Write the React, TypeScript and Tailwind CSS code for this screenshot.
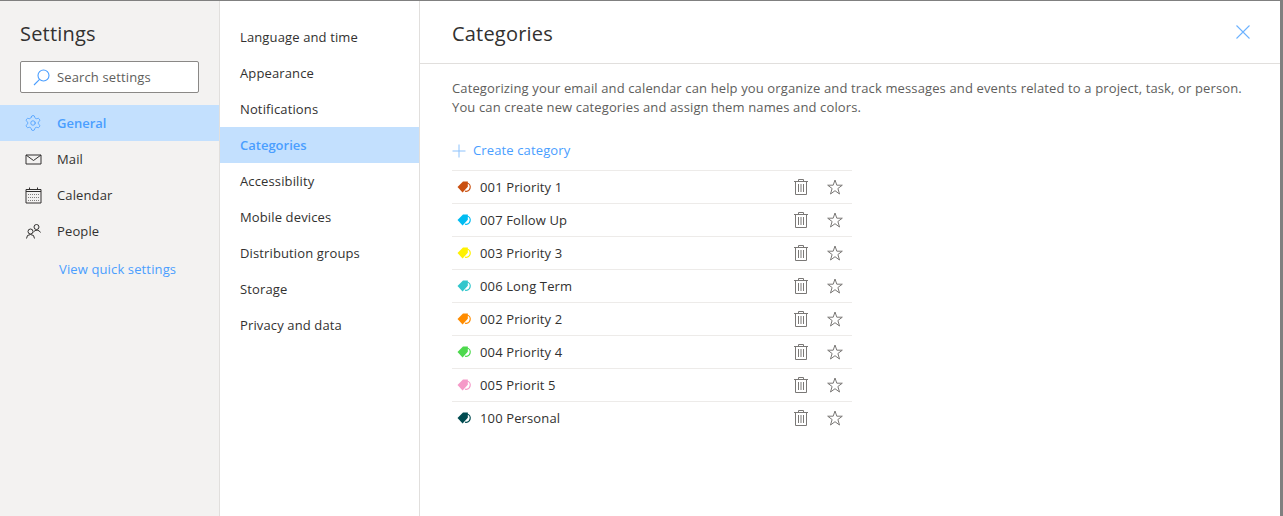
import { Settings } from 'lucide-react'

const BLUE = '#4a9eff'

const SearchIcon = (): React.JSX.Element => (
  <svg width="17" height="17" viewBox="0 0 17 17" fill="none" stroke={BLUE} strokeWidth="1.1" aria-hidden="true">
    <circle cx="10.5" cy="6.5" r="5.5" />
    <path d="M6.6 10.4 L1 16" />
  </svg>
)

const MailIcon = (): React.JSX.Element => (
  <svg width="17" height="17" viewBox="0 0 17 17" fill="none" stroke="#323130" strokeWidth="1" aria-hidden="true">
    <path d="M1 4 H16 V13 H1 Z" />
    <path d="M1 4 L8.5 9.5 L16 4" />
  </svg>
)

const CalendarIcon = (): React.JSX.Element => (
  <svg width="17" height="17" viewBox="0 0 17 17" fill="none" stroke="#323130" aria-hidden="true">
    <path d="M1 2.5 H16 V16 H1 Z" strokeWidth="1" />
    <path d="M1 4.5 H16" strokeWidth="1" />
    <path d="M4.5 0.5 V2.5 M12.5 0.5 V2.5" strokeWidth="1" />
    <path d="M3 7.5 H14 M3 10.5 H14 M3 13.5 H14" strokeWidth="1" strokeDasharray="1 1" strokeOpacity="0.6" />
  </svg>
)

const PeopleIcon = (): React.JSX.Element => (
  <svg width="17" height="17" viewBox="0 0 17 17" fill="none" stroke="#323130" strokeWidth="1" aria-hidden="true">
    <circle cx="11.5" cy="4" r="2.5" />
    <path d="M8.5 9 A4 4 0 0 1 15.5 9.5" />
    <circle cx="5.5" cy="8.5" r="2.5" />
    <path d="M1.5 15.5 A4 4 0 0 1 9.5 15.5" />
  </svg>
)

const CloseIcon = (): React.JSX.Element => (
  <svg width="14" height="14" viewBox="0 0 14 14" stroke="#6cb2ff" strokeWidth="1.1" aria-hidden="true">
    <path d="M0.5 0.5 L13.5 13.5 M13.5 0.5 L0.5 13.5" />
  </svg>
)

const PlusIcon = (): React.JSX.Element => (
  <svg width="14" height="14" viewBox="0 0 14 14" stroke="#8dc2fc" strokeWidth="1" aria-hidden="true">
    <path d="M7 0.5 V13.5 M0.5 7 H13.5" />
  </svg>
)

const TrashIcon = (): React.JSX.Element => (
  <svg width="14" height="16" viewBox="0 0 14 16" fill="none" stroke="#7a7876" strokeWidth="1" aria-hidden="true">
    <path d="M0 2.5 H14" />
    <path d="M4.5 2.5 V0.5 H9.5 V2.5" />
    <path d="M1.5 2.5 V15.5 H12.5 V2.5" />
    <path d="M4.5 5 V13 M7 5 V13 M9.5 5 V13" />
  </svg>
)

const StarIcon = (): React.JSX.Element => (
  <svg width="16" height="16" viewBox="0 0 16 16" fill="none" stroke="#7a7876" strokeWidth="1" aria-hidden="true">
    <path d="M8 1 L9.8 6.2 H15.3 L10.9 9.5 L12.5 15 L8 11.7 L3.5 15 L5.1 9.5 L0.7 6.2 H6.2 Z" />
  </svg>
)

const SETTINGS_NAV = [
  { label: 'General', icon: <Settings size={18} strokeWidth={1.1} />, active: true },
  { label: 'Mail', icon: <MailIcon />, active: false },
  { label: 'Calendar', icon: <CalendarIcon />, active: false },
  { label: 'People', icon: <PeopleIcon />, active: false },
]

const SUB_NAV = [
  'Language and time',
  'Appearance',
  'Notifications',
  'Categories',
  'Accessibility',
  'Mobile devices',
  'Distribution groups',
  'Storage',
  'Privacy and data',
]

const CATEGORIES = [
  { name: '001 Priority 1', color: '#ca5010' },
  { name: '007 Follow Up', color: '#00bcf2' },
  { name: '003 Priority 3', color: '#fff100' },
  { name: '006 Long Term', color: '#30c6cc' },
  { name: '002 Priority 2', color: '#ff8c00' },
  { name: '004 Priority 4', color: '#4cd94c' },
  { name: '005 Priorit 5', color: '#f599c8' },
  { name: '100 Personal', color: '#004b50' },
]

const CategoryTag = ({ color }: { color: string }): React.JSX.Element => (
  <svg width="16" height="12" viewBox="0 0 16 12" aria-hidden="true">
    <path d="M10 2 A4 4 0 1 1 8 10.2" fill="none" stroke={color} strokeWidth="1.2" />
    <path d="M0.5 6 L6 0.5 H10.8 V5.8 L5.6 11.5 Z" fill={color} />
  </svg>
)

export default function App(): React.JSX.Element {
  return (
    <div className="flex h-[516px] w-[1283px] overflow-hidden border-t border-r-[3px] border-[#808080] bg-white font-['Open_Sans',sans-serif] text-[13px] tracking-[0.13px] text-[#323130]">
      {/* Left nav */}
      <aside className="flex w-[220px] shrink-0 flex-col border-r border-[#e1dfdd] bg-[#f3f2f1]">
        <h1 className="mt-[18px] pl-5 text-[20px] leading-[30px] font-medium tracking-[0.2px]">Settings</h1>
        <div className="mt-[12px] ml-5 flex h-8 w-[179px] items-center rounded-[2px] border border-[#8a8886] bg-white pl-[12px] text-[#605e5c]">
          <SearchIcon />
          <span className="mt-[1px] ml-[7px]">Search settings</span>
        </div>
        <nav className="mt-3 flex flex-col">
          {SETTINGS_NAV.map(({ label, icon, active }) => (
            <div
              key={label}
              className={`flex h-9 items-center pl-6 ${active ? 'bg-[#c3e0fe] font-semibold tracking-normal text-[#4a9eff]' : ''}`}
            >
              <span className="flex w-[18px] justify-center">{icon}</span>
              <span className="mt-[2px] ml-[15px]">{label}</span>
            </div>
          ))}
        </nav>
        <a className="mt-[2px] block pl-[59px] leading-9 text-[#4a9eff]">View quick settings</a>
      </aside>

      {/* Sub nav */}
      <nav className="flex w-[200px] shrink-0 flex-col border-r border-[#e1dfdd] pt-[18px]">
        {SUB_NAV.map((item) => (
          <div
            key={item}
            className={`flex h-9 items-center pt-[2px] pl-5 ${item === 'Categories' ? 'bg-[#c3e0fe] font-semibold tracking-normal text-[#4a9eff]' : ''}`}
          >
            {item}
          </div>
        ))}
      </nav>

      {/* Content */}
      <main className="min-w-0 flex-1">
        <header className="flex h-[63px] items-start justify-between border-b border-[#e1dfdd] pt-[18px] pr-[30px] pl-8">
          <h2 className="text-[20px] leading-[30px] font-medium tracking-[0.2px]">Categories</h2>
          <span className="mt-[6px]">
            <CloseIcon />
          </span>
        </header>
        <div className="pl-8">
          <p className="mt-[15px] leading-[19px] text-[#605e5c]">
            Categorizing your email and calendar can help you organize and track messages and events related to a project, task, or person.
            <br />
            You can create new categories and assign them names and colors.
          </p>
          <div className="mt-[24px] flex items-center text-[#4a9eff]">
            <PlusIcon />
            <span className="ml-[7px]">Create category</span>
          </div>
          <ul className="mt-[9px] w-[400px]">
            {CATEGORIES.map((c) => (
              <li key={c.name} className="flex h-[33px] items-center border-t border-[#edebe9] pr-[9px] pl-[5px]">
                <CategoryTag color={c.color} />
                <span className="mt-[2px] ml-[7px] flex-1">{c.name}</span>
                <TrashIcon />
                <span className="ml-[19px]">
                  <StarIcon />
                </span>
              </li>
            ))}
          </ul>
        </div>
      </main>
    </div>
  )
}
